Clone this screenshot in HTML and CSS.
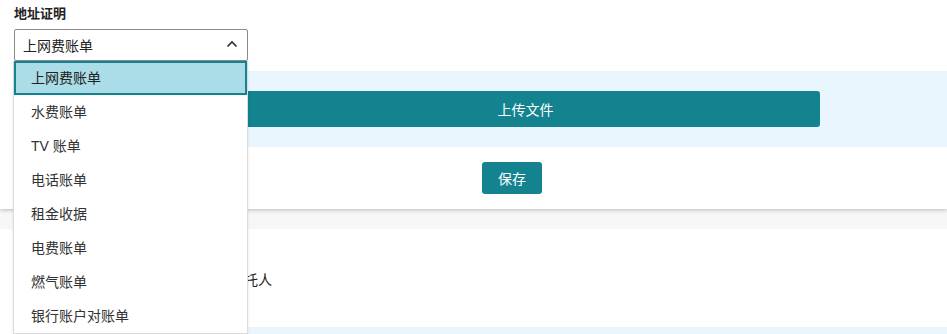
FILE: index.html
```html
<!DOCTYPE html>
<html lang="zh-CN">
<head>
<meta charset="utf-8">
<link rel="stylesheet" href="styles.css">
</head>
<body>
<div class="card">
  <div class="label">地址证明</div>
  <div class="select-wrap">
    <div class="select">
      <span>上网费账单</span>
      <svg class="chev" width="12" height="8" viewBox="0 0 12 8"><polyline points="1.5,6.5 6,2 10.5,6.5" fill="none" stroke="#333" stroke-width="1.7"/></svg>
    </div>
    <ul class="dropdown">
      <li class="opt active">上网费账单</li>
      <li class="opt">水费账单</li>
      <li class="opt">TV 账单</li>
      <li class="opt">电话账单</li>
      <li class="opt">租金收据</li>
      <li class="opt">电费账单</li>
      <li class="opt">燃气账单</li>
      <li class="opt">银行账户对账单</li>
    </ul>
  </div>
  <div class="band">
    <button class="btn upload">上传文件</button>
  </div>
  <div class="save-row">
    <button class="btn save">保存</button>
  </div>
</div>
<div class="gap"></div>
<div class="card2">
  <div class="row-text"><span class="txt">委托人</span></div>
  <div class="band2"></div>
</div>
</body>
</html>
```
FILE: styles.css
```css
* { box-sizing: border-box; }
html, body { margin: 0; padding: 0; }
body {
  width: 947px;
  height: 334px;
  overflow: hidden;
  background: #f7f7f7;
  font-family: "Liberation Sans", "Noto Sans CJK SC", sans-serif;
  color: #333;
}
.card {
  background: #fff;
  padding: 4px 0 0 14px;
  height: 209px;
  box-shadow: 0 1px 4px rgba(0,0,0,0.25);
  position: relative;
  z-index: 1;
}
.label {
  font-size: 13px;
  font-weight: bold;
  line-height: 20px;
  height: 20px;
  margin-bottom: 5px;
  color: #222;
}
.select-wrap {
  position: relative;
  width: 234px;
  z-index: 5;
}
.select {
  height: 32px;
  border: 1px solid #8a8a8a;
  border-radius: 2px;
  display: flex;
  align-items: center;
  justify-content: space-between;
  padding: 0 8px 0 8px;
  font-size: 14px;
  color: #222;
  background: #fff;
}
.chev { margin-right: 1px; margin-top: -2px; }
.dropdown {
  position: absolute;
  left: -1px;
  top: 32px;
  width: 235px;
  margin: 0;
  padding: 0;
  list-style: none;
  background: #fff;
  border: 1px solid #dcdcdc;
  border-top: none;
  box-shadow: 0 2px 4px rgba(0,0,0,0.08);
}
.opt {
  height: 34px;
  line-height: 30px;
  padding-left: 15px;
  font-size: 14px;
  color: #333;
  border: 2px solid transparent;
}
.opt.active {
  background: #aadde7;
  border-color: #13838f;
  color: #222;
}
.band {
  margin-top: 10px;
  background: #eaf6fe;
  height: 76px;
  padding: 20px 127px 20px 217px;
}
.btn {
  border: none;
  background: #13838f;
  color: #fff;
  font-family: "Liberation Sans", "Noto Sans CJK SC", sans-serif;
  font-size: 14px;
  border-radius: 3px;
  padding: 0;
  display: block;
}
.upload {
  width: 100%;
  height: 36px;
}
.save-row {
  padding: 15px 0 0 468px;
}
.save {
  width: 60px;
  height: 32px;
}
.gap { height: 20px; }
.card2 {
  background: #fff;
  height: 120px;
  padding-left: 14px;
}
.row-text {
  height: 98px;
  display: flex;
  align-items: center;
  padding-top: 1px;
}
.txt {
  margin-left: 216px;
  font-size: 14px;
  color: #222;
}
.band2 {
  background: #eaf6fe;
  height: 20px;
}
```
